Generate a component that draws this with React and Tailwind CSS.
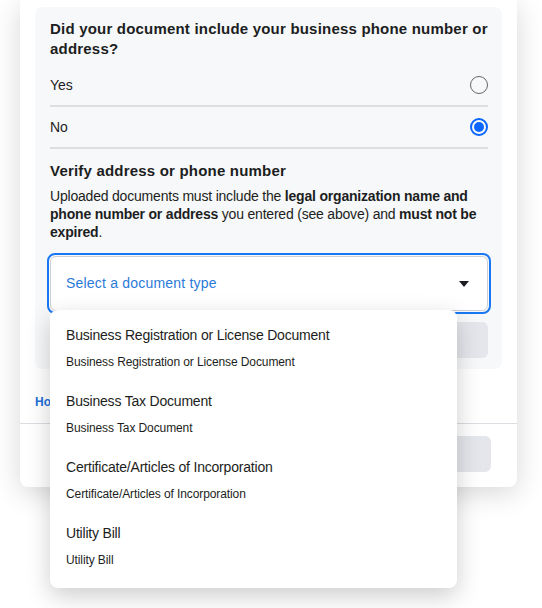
const options = [
  "Business Registration or License Document",
  "Business Tax Document",
  "Certificate/Articles of Incorporation",
  "Utility Bill",
];

function Radio({ checked }) {
  if (checked) {
    return (
      <span className="flex h-[18px] w-[18px] items-center justify-center rounded-full border-2 border-[#0866ff]">
        <span className="h-[10px] w-[10px] rounded-full bg-[#0866ff]" />
      </span>
    );
  }
  return <span className="h-[18px] w-[18px] rounded-full border-[1.5px] border-[#65676b]" />;
}

export default function App() {
  return (
    <div
      className="min-h-[608px] bg-white pl-[20px] text-[#1c1e21]"
      style={{ fontFamily: '"Liberation Sans", Arial, sans-serif' }}
    >
      <div className="w-[497px] rounded-b-lg bg-white shadow-[0_6px_28px_rgba(0,0,0,0.16)]">
        <div className="px-[15px] pt-[7px]">
          <div className="rounded-lg bg-[#f7f8fa] pl-[15px] pr-[14px] pt-[12px] pb-[11px]">
            <h2 className="text-[15px] font-bold leading-[20px] tracking-[0.2px]">
              Did your document include your business phone number or address?
            </h2>

            <div className="mt-[4px]">
              <div className="flex h-[42px] items-center justify-between pt-[2px]">
                <span className="text-[14px]">Yes</span>
                <Radio />
              </div>
              <div className="h-[2px] bg-[#dcdee2]" />
              <div className="flex h-[40px] items-center justify-between">
                <span className="text-[14px]">No</span>
                <Radio checked />
              </div>
              <div className="h-[2px] bg-[#dcdee2]" />
            </div>

            <h3 className="mt-[12px] text-[15px] font-bold leading-[20px] tracking-[0.2px]">
              Verify address or phone number
            </h3>
            <p className="mt-[6px] text-[14px] leading-[18px] tracking-[-0.2px]">
              Uploaded documents must include the <b>legal organization name and phone number or address</b> you
              entered (see above) and <b>must not be expired</b>.
            </p>

            <div className="relative -mx-[3px] mt-[12px]">
              <div className="rounded-[8px] border-2 border-[#1877f2] p-px">
                <div className="flex h-[55px] items-center justify-between rounded-[6px] border border-[#ccd0d5] bg-white pl-[15px] pr-[18px]">
                  <span className="text-[14px] tracking-[0.2px] text-[#2a7ad8]">Select a document type</span>
                  <svg width="10" height="6" viewBox="0 0 10 6">
                    <path d="M0 0h10L5 6z" fill="#1c1e21" />
                  </svg>
                </div>
              </div>

              <div className="absolute left-[3px] top-[57px] z-10 w-[407px] rounded-lg bg-white pt-[5px] pb-[9px] shadow-[0_8px_24px_rgba(0,0,0,0.2)]">
                {options.map((o) => (
                  <div key={o} className="px-[16px] pt-[10px] pb-[11px]">
                    <div className="text-[14px] leading-[20px] tracking-[-0.2px]">{o}</div>
                    <div className="mt-[9px] text-[12px] leading-[16px] tracking-[-0.1px]">{o}</div>
                  </div>
                ))}
              </div>
            </div>

            <div className="mt-[8px] h-[36px] rounded-md bg-[#e4e6eb]" />
          </div>
        </div>

        <div className="px-[15px] pt-[25px] pb-[13px]">
          <a className="block text-[12px] font-bold leading-[16px] text-[#216fdb]">How to verify your business</a>
        </div>
        <div className="h-px bg-[#dadde1]" />
        <div className="flex justify-end pr-[26px] pt-[12px] pb-[15px]">
          <div className="h-[36px] w-[90px] rounded-md bg-[#e4e6eb]" />
        </div>
      </div>
    </div>
  );
}
